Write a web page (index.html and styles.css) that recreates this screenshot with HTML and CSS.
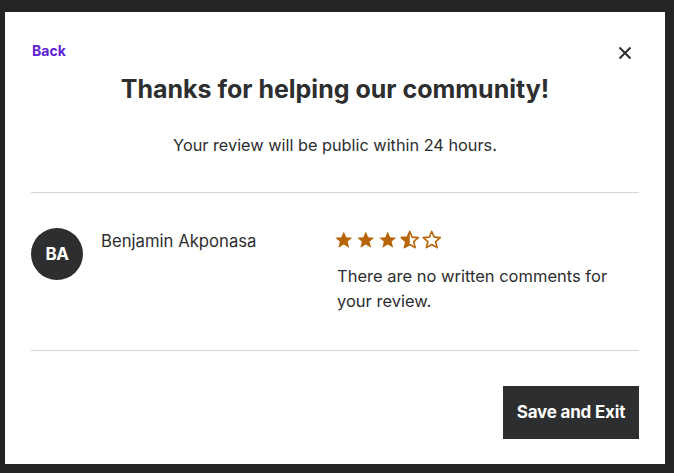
FILE: index.html
```html
<!DOCTYPE html>
<html lang="en">
<head>
<meta charset="utf-8">
<title>Review submitted</title>
<link rel="stylesheet" href="styles.css">
</head>
<body>
<div class="modal">
  <div class="header">
    <a class="back" href="#">Back</a>
    <button class="close" aria-label="Close">
      <svg width="14" height="14" viewBox="0 0 14 14"><path d="M1.5 1.5l11 11M12.5 1.5l-11 11" stroke="#2d2e2f" stroke-width="2" fill="none"/></svg>
    </button>
  </div>
  <h1 class="title">Thanks for helping our community!</h1>
  <p class="subtitle">Your review will be public within 24 hours.</p>
  <div class="review">
    <div class="avatar">BA</div>
    <div class="name">Benjamin Akponasa</div>
    <div class="detail">
      <div class="stars">
        <svg class="star" viewBox="0 0 24 24"><path d="M12 1.8l3 7 7.5.6-5.7 4.9 1.8 7.4L12 17.8l-6.6 3.9 1.8-7.4L1.5 9.4l7.5-.6z" fill="#b8650a"/></svg>
        <svg class="star" viewBox="0 0 24 24"><path d="M12 1.8l3 7 7.5.6-5.7 4.9 1.8 7.4L12 17.8l-6.6 3.9 1.8-7.4L1.5 9.4l7.5-.6z" fill="#b8650a"/></svg>
        <svg class="star" viewBox="0 0 24 24"><path d="M12 1.8l3 7 7.5.6-5.7 4.9 1.8 7.4L12 17.8l-6.6 3.9 1.8-7.4L1.5 9.4l7.5-.6z" fill="#b8650a"/></svg>
        <svg class="star" viewBox="0 0 24 24"><path d="M12 1.8l3 7 7.5.6-5.7 4.9 1.8 7.4L12 17.8l-6.6 3.9 1.8-7.4L1.5 9.4l7.5-.6z" fill="none" stroke="#b8650a" stroke-width="2" stroke-linejoin="round"/><path d="M12 1.8V17.8l-6.6 3.9 1.8-7.4L1.5 9.4l7.5-.6z" fill="#b8650a"/></svg>
        <svg class="star" viewBox="0 0 24 24"><path d="M12 1.8l3 7 7.5.6-5.7 4.9 1.8 7.4L12 17.8l-6.6 3.9 1.8-7.4L1.5 9.4l7.5-.6z" fill="none" stroke="#b8650a" stroke-width="2" stroke-linejoin="round"/></svg>
      </div>
      <p class="comment">There are no written comments for your review.</p>
    </div>
  </div>
  <div class="footer">
    <button class="save">Save and Exit</button>
  </div>
</div>
</body>
</html>
```

FILE: styles.css
```css
html, body {
  margin: 0;
  padding: 0;
}
body {
  background: #232425;
  font-family: Inter, "Liberation Sans", Arial, sans-serif;
  color: #2d2e2f;
}
.modal {
  margin: 12px 9px 0 5px;
  height: 452px;
  box-sizing: border-box;
  background: #ffffff;
  padding: 0 26px;
  display: flex;
  flex-direction: column;
}
.header {
  display: flex;
  justify-content: space-between;
  align-items: center;
  padding-top: 27px;
  height: 22px;
}
.back {
  font-size: 14px;
  font-weight: 700;
  color: #5d23d3;
  text-decoration: none;
  margin-left: 1px;
}
.close {
  border: 0;
  background: none;
  padding: 0;
  width: 14px;
  height: 14px;
  margin-right: 7px;
  margin-top: 5px;
  display: flex;
}
.title {
  margin: 12px 0 0;
  text-align: center;
  font-size: 25px;
  line-height: 32px;
  font-weight: 700;
}
.subtitle {
  margin: 28px 0 0;
  text-align: center;
  font-size: 16.3px;
  line-height: 24px;
  padding-bottom: 35px;
  border-bottom: 1px solid #d5d5d9;
}
.review {
  display: grid;
  grid-template-columns: 52px 215px 1fr;
  column-gap: 18px;
  padding: 35px 0 36px;
  border-bottom: 1px solid #d5d5d9;
}
.avatar {
  width: 52px;
  height: 52px;
  border-radius: 50%;
  background: #2d2e2f;
  color: #ffffff;
  font-weight: 700;
  font-size: 17px;
  letter-spacing: -0.5px;
  display: flex;
  align-items: center;
  justify-content: center;
}
.name {
  font-size: 16.7px;
  line-height: 24px;
  margin-top: 1px;
}
.detail {
  display: flex;
  flex-direction: column;
}
.stars {
  display: flex;
  gap: 2.5px;
  margin-top: 1.5px;
}
.star {
  width: 19.5px;
  height: 19.5px;
}
.comment {
  margin: 14.5px 0 0 3px;
  font-size: 16.5px;
  line-height: 25px;
  max-width: 285px;
}
.footer {
  display: flex;
  justify-content: flex-end;
  padding-top: 35px;
}
.save {
  width: 136px;
  height: 53px;
  border: 0;
  background: #2d2e2f;
  color: #ffffff;
  font-family: Inter, "Liberation Sans", Arial, sans-serif;
  font-weight: 700;
  font-size: 17px;
  letter-spacing: -0.2px;
}
```
